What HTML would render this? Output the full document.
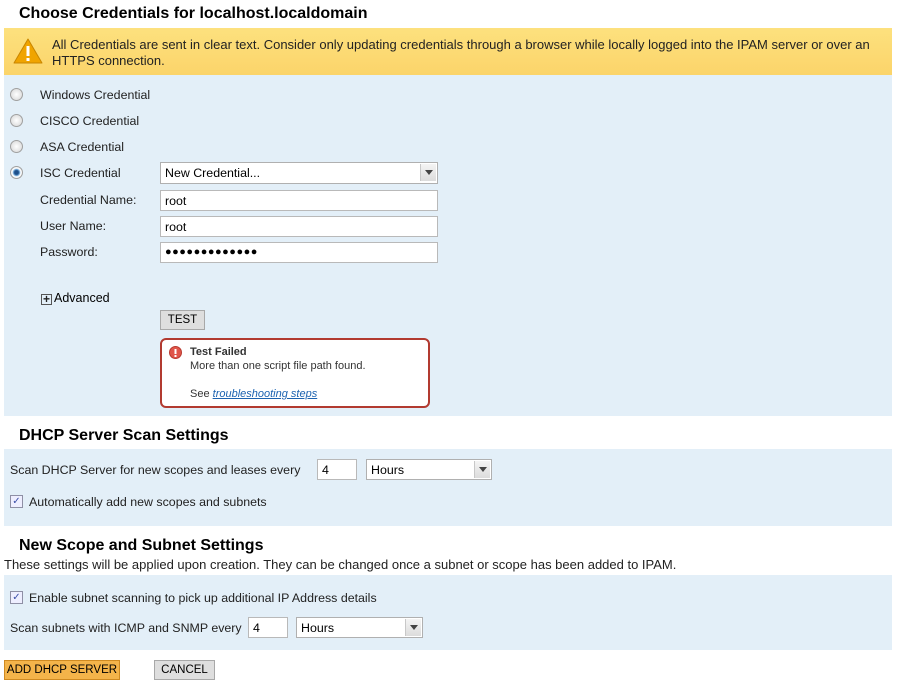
<!DOCTYPE html>
<html><head><style>
body{margin:0;width:915px;height:694px;background:#fff;font-family:"Liberation Sans",Arial,sans-serif;font-size:12.4px;color:#222;position:relative;overflow:hidden}
.a{position:absolute}
h{position:absolute;font-weight:bold;font-size:16px;color:#000}
.panel{position:absolute;left:4px;width:888px;background:#e3eff8}
.inp{position:absolute;background:#fff;border:1px solid #b9b9b9;box-sizing:border-box;height:21px;padding:3px 4px;font-size:12.4px;color:#000}
.sel{position:absolute;background:#fff;border:1px solid #b0b0b0;box-sizing:border-box;height:21px;padding:3px 4px;font-size:12.4px;color:#000}
.sel i{position:absolute;right:1px;top:1px;width:15px;height:17px;background:linear-gradient(#f4f4f4,#dcdcdc);border-left:1px solid #c8c8c8}
.sel i:after{content:"";position:absolute;left:4px;top:6px;border-left:4px solid transparent;border-right:4px solid transparent;border-top:5px solid #444}
.radio{position:absolute;left:10px;width:13px;height:13px;border-radius:50%;border:1px solid #a0a0a0;background:radial-gradient(#fff,#d4d4d4);box-sizing:border-box}
.cb{position:absolute;left:10px;width:13px;height:13px;border:1px solid #8e8fa5;background:#eef;box-sizing:border-box;font-size:10px;line-height:11px;text-align:center;color:#3b4ea8}
.btn{position:absolute;box-sizing:border-box;border:1px solid #a8a8a8;background:#dedede;font-size:11.5px;text-align:center;line-height:18px;color:#000}
</style></head><body>
<h style="left:19px;top:5px">Choose Credentials for localhost.localdomain</h>
<div class="a" style="left:4px;top:28px;width:888px;height:47px;background:linear-gradient(#fde17e,#fbd46a)"></div>
<svg class="a" style="left:12px;top:36px" width="32" height="30"><path d="M16 3 L30 27 L2 27 Z" fill="#f0a400" stroke="#c98600" stroke-linejoin="round"/><rect x="14.5" y="10" width="3" height="10" fill="#fff"/><rect x="14.5" y="22" width="3" height="3" fill="#fff"/></svg>
<div class="a" style="left:52px;top:37px;font-size:13px;line-height:16px;color:#222;width:830px">All Credentials are sent in clear text. Consider only updating credentials through a browser while locally logged into the IPAM server or over an HTTPS connection.</div>
<div class="panel" style="top:75px;height:341px"></div>
<div class="radio" style="top:88px"></div><div class="a" style="left:40px;top:88px">Windows Credential</div>
<div class="radio" style="top:114px"></div><div class="a" style="left:40px;top:114px">CISCO Credential</div>
<div class="radio" style="top:140px"></div><div class="a" style="left:40px;top:140px">ASA Credential</div>
<div class="radio" style="top:166px;background:radial-gradient(#1d4f8a 25%,#6fa6d6 40%,#fff 55%,#d4d4d4)"></div><div class="a" style="left:40px;top:166px">ISC Credential</div>
<div class="sel" style="left:160px;top:162px;width:278px;height:22px">New Credential...<i></i></div>
<div class="a" style="left:40px;top:193px">Credential Name:</div><div class="inp" style="left:160px;top:190px;width:278px">root</div>
<div class="a" style="left:40px;top:219px">User Name:</div><div class="inp" style="left:160px;top:216px;width:278px">root</div>
<div class="a" style="left:40px;top:245px">Password:</div><div class="inp" style="left:160px;top:242px;width:278px;letter-spacing:0.5px;font-size:11px">●●●●●●●●●●●●●</div>
<div class="a" style="left:41px;top:294px;width:11px;height:11px;border:1px solid #555;box-sizing:border-box;font-size:12px;line-height:8px;text-align:center;font-weight:bold">+</div>
<div class="a" style="left:54px;top:291px;font-size:12.5px;color:#000">Advanced</div>
<div class="btn" style="left:160px;top:310px;width:45px;height:20px">TEST</div>
<div class="a" style="left:160px;top:338px;width:270px;height:70px;box-sizing:border-box;border:2px solid #b23a30;border-radius:6px;background:#fff"></div>
<svg class="a" style="left:169px;top:346px" width="13" height="13"><circle cx="6.5" cy="6.5" r="6" fill="#e0554a" stroke="#b83a30"/><rect x="5.5" y="3" width="2" height="5" fill="#fff"/><rect x="5.5" y="9" width="2" height="2" fill="#fff"/></svg>
<div class="a" style="left:190px;top:346px;font-size:11px;font-weight:bold;color:#333">Test Failed</div>
<div class="a" style="left:190px;top:360px;font-size:11px;color:#333">More than one script file path found.</div>
<div class="a" style="left:190px;top:388px;font-size:11px;color:#333">See <span style="color:#1b62b0;font-style:italic;text-decoration:underline">troubleshooting steps</span></div>
<h style="left:19px;top:427px">DHCP Server Scan Settings</h>
<div class="panel" style="top:449px;height:77px"></div>
<div class="a" style="left:10px;top:463px">Scan DHCP Server for new scopes and leases every</div>
<div class="inp" style="left:317px;top:459px;width:40px">4</div>
<div class="sel" style="left:366px;top:459px;width:126px">Hours<i></i></div>
<div class="cb" style="top:495px">✓</div><div class="a" style="left:29px;top:495px">Automatically add new scopes and subnets</div>
<h style="left:19px;top:537px">New Scope and Subnet Settings</h>
<div class="a" style="left:4px;top:557px;font-size:13px">These settings will be applied upon creation. They can be changed once a subnet or scope has been added to IPAM.</div>
<div class="panel" style="top:575px;height:75px"></div>
<div class="cb" style="top:591px">✓</div><div class="a" style="left:29px;top:591px">Enable subnet scanning to pick up additional IP Address details</div>
<div class="a" style="left:10px;top:621px">Scan subnets with ICMP and SNMP every</div>
<div class="inp" style="left:248px;top:617px;width:40px">4</div>
<div class="sel" style="left:296px;top:617px;width:127px">Hours<i></i></div>
<div class="btn" style="left:4px;top:660px;width:116px;height:20px;background:#f4b44a;border-color:#d08a20">ADD DHCP SERVER</div>
<div class="btn" style="left:154px;top:660px;width:61px;height:20px">CANCEL</div>
</body></html>
